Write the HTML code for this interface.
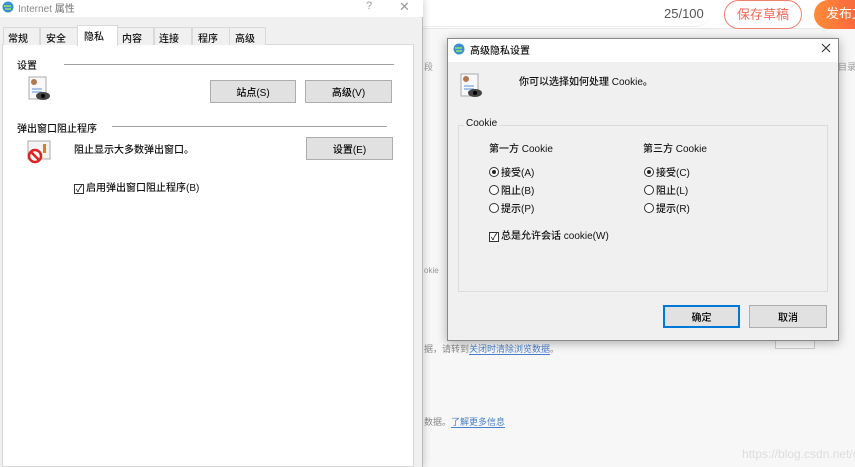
<!DOCTYPE html>
<html><head><meta charset="utf-8"><style>
*{margin:0;padding:0;box-sizing:border-box}
body{width:855px;height:467px;overflow:hidden;position:relative;background:#f7f7f7;font-family:"Liberation Sans","Noto Sans CJK SC",sans-serif;font-size:10px;color:#000}
.a{position:absolute;white-space:nowrap}
.t{font-weight:500;color:#111}
.btn{position:absolute;background:#e1e1e1;border:1px solid #adadad;text-align:center;font-size:10px;display:flex;align-items:center;justify-content:center;font-weight:500}
.rad{display:inline-block;width:10px;height:10px;border:1px solid #333;border-radius:50%;vertical-align:-1px;margin-right:2px;position:relative;background:#fff}
.rad.on::after{content:"";position:absolute;left:2px;top:2px;width:4px;height:4px;border-radius:50%;background:#222}
.chk{display:inline-block;width:10px;height:10px;border:1px solid #333;vertical-align:-1px;margin-right:2px;background:#fff;font-size:9px;line-height:8px;text-align:center}
</style></head><body>
<div class="a" style="left:423px;top:0;width:432px;height:28px;background:#fff"></div>
<div class="a" style="left:423px;top:28px;width:432px;height:1px;background:#e8e8e8"></div>
<div class="a" style="left:420px;top:0;width:290px;height:27px;background:#fff;border-radius:0 14px 14px 0;border-bottom:1px solid #eee"></div>
<div class="a" style="left:664px;top:6px;font-size:13px;color:#555">25/100</div>
<div class="a" style="left:724px;top:0;width:78px;height:29px;border:1px solid #f08070;border-radius:15px;color:#f06a5a;font-size:13px;text-align:center;line-height:27px">保存草稿</div>
<div class="a" style="left:814px;top:0;width:60px;height:29px;border-radius:15px;background:linear-gradient(90deg,#ff8c3a,#f8593d);color:#fff;font-size:13px;line-height:28px;padding-left:12px">发布文</div>
<div class="a" style="left:424px;top:60px;font-size:9px;color:#999">段</div>
<div class="a" style="left:838px;top:60px;font-size:9px;color:#999">目录</div>
<div class="a" style="left:424px;top:266px;font-size:8px;color:#999">okie</div>
<div class="a" style="left:424px;top:342px;font-size:9px;color:#888">据，请转到<span style="color:#4a7fc9;border-bottom:1px solid #4a7fc9">关闭时清除浏览数据</span>。</div>
<div class="a" style="left:775px;top:333px;width:40px;height:16px;border:1px solid #ccc;background:#fafafa"></div>
<div class="a" style="left:424px;top:415px;font-size:9px;color:#888">数据。<span style="color:#4a7fc9;border-bottom:1px solid #4a7fc9">了解更多信息</span></div>
<div class="a" style="left:742px;top:447px;font-size:12px;color:#ddd">https://blog.csdn.net/c</div>

<div class="a" style="left:0;top:0;width:423px;height:467px;background:#f0f0f0;border-right:1px solid #bbb;box-shadow:2px 0 6px rgba(0,0,0,.15)"></div>
<div class="a" style="left:0;top:0;width:423px;height:17px;background:#fff"></div>
<svg class="a" style="left:2px;top:1px" width="13" height="13"><circle cx="6" cy="6" r="5.5" fill="#3b8fd6"/><path d="M2 5h7M3 8h6" stroke="#7fd07a" stroke-width="2"/></svg>
<div class="a" style="left:18px;top:0;font-size:10px;color:#888;font-weight:500">Internet 属性</div>
<div class="a" style="left:366px;top:0;font-size:11px;color:#999">?</div>
<div class="a" style="left:399px;top:-1px;font-size:13px;color:#999">✕</div>
<div class="a" style="left:2px;top:44px;width:412px;height:423px;background:#fff;border:1px solid #d9d9d9"></div>
<div class="a t" style="left:3px;top:27px;width:37px;height:18px;background:#f0f0f0;border:1px solid #d9d9d9;border-bottom:none;padding:2px 0 0 4px">常规</div>
<div class="a t" style="left:40px;top:27px;width:38px;height:18px;background:#f0f0f0;border:1px solid #d9d9d9;border-bottom:none;padding:2px 0 0 5px">安全</div>
<div class="a t" style="left:77px;top:25px;width:41px;height:21px;background:#fff;border:1px solid #d9d9d9;border-bottom:none;padding:2px 0 0 6px">隐私</div>
<div class="a t" style="left:117px;top:27px;width:37px;height:18px;background:#f0f0f0;border:1px solid #d9d9d9;border-bottom:none;padding:2px 0 0 4px">内容</div>
<div class="a t" style="left:154px;top:27px;width:38px;height:18px;background:#f0f0f0;border:1px solid #d9d9d9;border-bottom:none;padding:2px 0 0 4px">连接</div>
<div class="a t" style="left:192px;top:27px;width:38px;height:18px;background:#f0f0f0;border:1px solid #d9d9d9;border-bottom:none;padding:2px 0 0 5px">程序</div>
<div class="a t" style="left:229px;top:27px;width:37px;height:18px;background:#f0f0f0;border:1px solid #d9d9d9;border-bottom:none;padding:2px 0 0 5px">高级</div>
<div class="a t" style="left:17px;top:57px">设置</div>
<div class="a" style="left:64px;top:64px;width:330px;height:1px;background:#a0a0a0"></div>
<svg class="a" style="left:27px;top:76px" width="26" height="26"><rect x="2" y="1" width="17" height="22" fill="#f8f8f8" stroke="#aaa"/><circle cx="7" cy="6" r="3" fill="#b07850"/><path d="M5 13h10M5 16h10" stroke="#5a8fd0"/><ellipse cx="16" cy="20" rx="7" ry="4" fill="#444"/><circle cx="16" cy="20" r="2" fill="#000"/></svg>
<div class="btn" style="left:210px;top:80px;width:86px;height:23px">站点(S)</div>
<div class="btn" style="left:305px;top:80px;width:87px;height:23px">高级(V)</div>
<div class="a t" style="left:17px;top:120px">弹出窗口阻止程序</div>
<div class="a" style="left:112px;top:126px;width:275px;height:1px;background:#a0a0a0"></div>
<svg class="a" style="left:26px;top:139px" width="26" height="26"><rect x="2" y="2" width="22" height="18" fill="#f4f4f4" stroke="#aaa"/><rect x="17" y="5" width="3" height="9" fill="#e07b20"/><circle cx="9" cy="17" r="6" fill="#fff" stroke="#d22" stroke-width="2.5"/><path d="M5 13l8 8" stroke="#d22" stroke-width="2.5"/></svg>
<div class="a t" style="left:74px;top:141px">阻止显示大多数弹出窗口。</div>
<div class="btn" style="left:306px;top:137px;width:87px;height:23px">设置(E)</div>
<div class="a t" style="left:74px;top:179px"><span class="chk">✓</span>启用弹出窗口阻止程序(B)</div>

<div class="a" style="left:447px;top:38px;width:392px;height:303px;background:#f0f0f0;border:1px solid #888;box-shadow:0 2px 10px rgba(0,0,0,.3)"></div>
<div class="a" style="left:448px;top:39px;width:390px;height:23px;background:#fff"></div>
<svg class="a" style="left:453px;top:43px" width="13" height="13"><circle cx="6" cy="6" r="5.5" fill="#3b8fd6"/><path d="M2 5h7M3 8h6" stroke="#7fd07a" stroke-width="2"/></svg>
<div class="a t" style="left:470px;top:42px">高级隐私设置</div>
<svg class="a" style="left:821px;top:43px" width="10" height="10"><path d="M1 1l8 8M9 1l-8 8" stroke="#333" stroke-width="1.1"/></svg>
<svg class="a" style="left:459px;top:73px" width="26" height="26"><rect x="2" y="1" width="17" height="22" fill="#f8f8f8" stroke="#aaa"/><circle cx="7" cy="6" r="3" fill="#b07850"/><path d="M5 13h10M5 16h10" stroke="#5a8fd0"/><ellipse cx="16" cy="20" rx="7" ry="4" fill="#444"/><circle cx="16" cy="20" r="2" fill="#000"/></svg>
<div class="a t" style="left:519px;top:73px">你可以选择如何处理 Cookie。</div>
<div class="a" style="left:458px;top:125px;width:370px;height:167px;border:1px solid #dcdcdc"></div>
<div class="a t" style="left:464px;top:118px;background:#f0f0f0;padding:0 2px">Cookie</div>
<div class="a t" style="left:489px;top:140px">第一方 Cookie</div>
<div class="a t" style="left:643px;top:140px">第三方 Cookie</div>
<div class="a t" style="left:489px;top:164px"><span class="rad on"></span>接受(A)</div>
<div class="a t" style="left:489px;top:182px"><span class="rad"></span>阻止(B)</div>
<div class="a t" style="left:489px;top:200px"><span class="rad"></span>提示(P)</div>
<div class="a t" style="left:644px;top:164px"><span class="rad on"></span>接受(C)</div>
<div class="a t" style="left:644px;top:182px"><span class="rad"></span>阻止(L)</div>
<div class="a t" style="left:644px;top:200px"><span class="rad"></span>提示(R)</div>
<div class="a t" style="left:489px;top:227px"><span class="chk">✓</span>总是允许会话 cookie(W)</div>
<div class="btn" style="left:663px;top:305px;width:77px;height:23px;border:2px solid #0078d7">确定</div>
<div class="btn" style="left:749px;top:305px;width:78px;height:23px">取消</div>
</body></html>
